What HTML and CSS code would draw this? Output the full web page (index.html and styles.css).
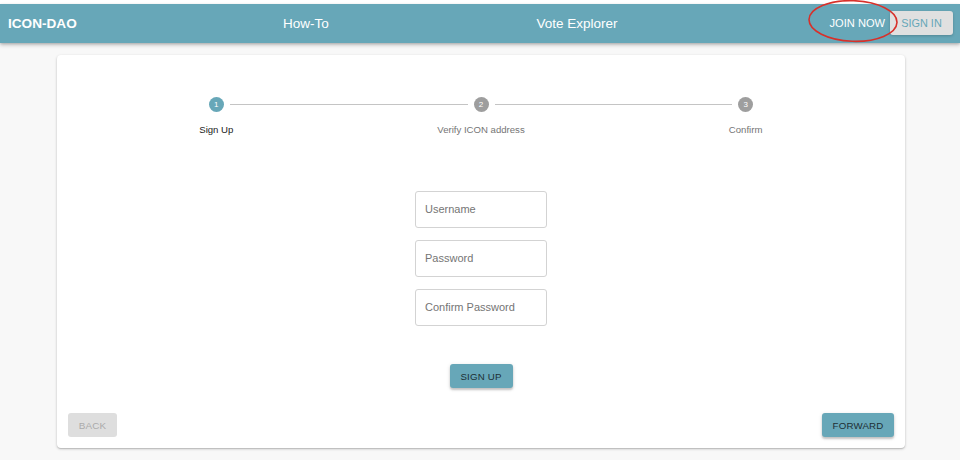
FILE: index.html
```html
<!DOCTYPE html>
<html lang="en">
<head>
<meta charset="utf-8">
<title>ICON-DAO</title>
<link rel="stylesheet" href="styles.css">
</head>
<body>
<div class="page">
  <header class="appbar">
    <div class="brand">ICON-DAO</div>
    <a class="nav-link nav-howto">How-To</a>
    <a class="nav-link nav-vote">Vote Explorer</a>
    <div class="spacer"></div>
    <div class="join-wrap">
      <button class="btn-text">JOIN NOW</button>
      <svg class="annot" width="92" height="44" viewBox="0 0 92 44"><ellipse cx="46" cy="22" rx="44" ry="20.3" fill="none" stroke="#d8302a" stroke-width="1.6" transform="rotate(2 46 22)"/></svg>
    </div>
    <button class="btn-signin">SIGN IN</button>
  </header>

  <main class="card">
    <div class="stepper">
      <div class="step">
        <div class="step-head">
          <span class="line hidden"></span>
          <span class="dot active">1</span>
          <span class="line"></span>
        </div>
        <div class="step-label active">Sign Up</div>
      </div>
      <div class="step">
        <div class="step-head">
          <span class="line"></span>
          <span class="dot">2</span>
          <span class="line"></span>
        </div>
        <div class="step-label">Verify ICON address</div>
      </div>
      <div class="step">
        <div class="step-head">
          <span class="line"></span>
          <span class="dot">3</span>
          <span class="line hidden"></span>
        </div>
        <div class="step-label">Confirm</div>
      </div>
    </div>

    <form class="form">
      <input class="field" type="text" placeholder="Username">
      <input class="field" type="password" placeholder="Password">
      <input class="field" type="password" placeholder="Confirm Password">
      <button type="button" class="btn-primary btn-signup">SIGN UP</button>
    </form>

    <div class="actions">
      <button class="btn-disabled">BACK</button>
      <button class="btn-primary btn-forward">FORWARD</button>
    </div>
  </main>
</div>
</body>
</html>
```
FILE: styles.css
```css
* { box-sizing: border-box; }
html, body { margin: 0; padding: 0; }
body {
  background: #f8f8f8;
  font-family: "Liberation Sans", Arial, Helvetica, sans-serif;
  width: 960px;
  height: 460px;
  overflow: hidden;
}
.page {
  border-top: 4px solid #ffffff;
}
.appbar {
  height: 39px;
  background: #67a7b8;
  display: flex;
  align-items: center;
  padding: 0 7px 1px 8px;
  box-shadow: 0 2px 4px rgba(0,0,0,0.22), 0 1px 2px rgba(0,0,0,0.12);
  color: #fff;
  position: relative;
  z-index: 2;
}
.brand {
  width: 164px;
  font-weight: bold;
  font-size: 13.6px;
}
.nav-link {
  font-size: 13.5px;
  text-align: center;
  color: #fff;
}
.nav-howto { width: 268px; }
.nav-vote { width: 274px; }
.spacer { flex: 1; }
.join-wrap {
  position: relative;
}
.btn-text {
  background: none;
  border: 0;
  color: #fff;
  font-family: inherit;
  font-size: 11.1px;
  padding: 0 5px 0 0;
  height: 24px;
}
.annot {
  position: absolute;
  left: -23px;
  top: -12px;
  pointer-events: none;
}
.btn-signin {
  width: 63px;
  height: 24px;
  border: 0;
  border-radius: 3px;
  background: #e0e0e0;
  color: #67a7b8;
  font-family: inherit;
  font-size: 10.9px;
  padding: 0;
  box-shadow: 0 1px 3px rgba(0,0,0,0.2);
}
.card {
  width: 848px;
  margin: 12px 0 0 57px;
  background: #fff;
  border-radius: 4px;
  box-shadow: 0 1px 3px rgba(0,0,0,0.2), 0 1px 1px rgba(0,0,0,0.12);
  padding: 42px 11px 11px;
}
.stepper {
  display: grid;
  grid-template-columns: repeat(3, 1fr);
  margin: 0 16px;
}
.step-head {
  display: flex;
  align-items: center;
  height: 15px;
}
.line {
  flex: 1;
  height: 1px;
  background: #c4c4c4;
}
.line:first-child { margin-right: 6px; }
.line:last-child { margin-left: 6px; }
.line.hidden { visibility: hidden; }
.dot {
  width: 15px;
  height: 15px;
  border-radius: 50%;
  background: #9e9e9e;
  color: #fff;
  font-size: 8px;
  display: flex;
  align-items: center;
  justify-content: center;
}
.dot.active { background: #67a7b8; }
.step-label {
  margin-top: 12px;
  text-align: center;
  font-size: 9.6px;
  line-height: 12px;
  color: #757575;
}
.step-label.active { color: #222; }
.form {
  margin-top: 55px;
  display: flex;
  flex-direction: column;
  align-items: center;
  gap: 12px;
}
.field {
  width: 132px;
  height: 37px;
  border: 1px solid #d3d3d3;
  border-radius: 3px;
  padding: 0 9px 1px;
  font-family: inherit;
  font-size: 11px;
  color: #333;
  outline: none;
  margin: 0;
}
.field::placeholder { color: #757575; }
.btn-primary {
  height: 24px;
  border: 0;
  border-radius: 3px;
  background: #67a7b8;
  color: #1d2f35;
  font-family: inherit;
  font-size: 9.7px;
  letter-spacing: 0.2px;
  padding: 0;
  box-shadow: 0 2px 2px rgba(0,0,0,0.18), 0 1px 4px rgba(0,0,0,0.12);
}
.btn-signup {
  width: 63px;
  margin-top: 26px;
}
.actions {
  margin-top: 25px;
  display: flex;
  justify-content: space-between;
}
.btn-disabled {
  width: 49px;
  height: 24px;
  border: 0;
  border-radius: 3px;
  background: #dedede;
  color: #ababab;
  font-family: inherit;
  font-size: 9.9px;
  letter-spacing: 0.2px;
  padding: 0;
}
.btn-forward {
  width: 72px;
}
```
